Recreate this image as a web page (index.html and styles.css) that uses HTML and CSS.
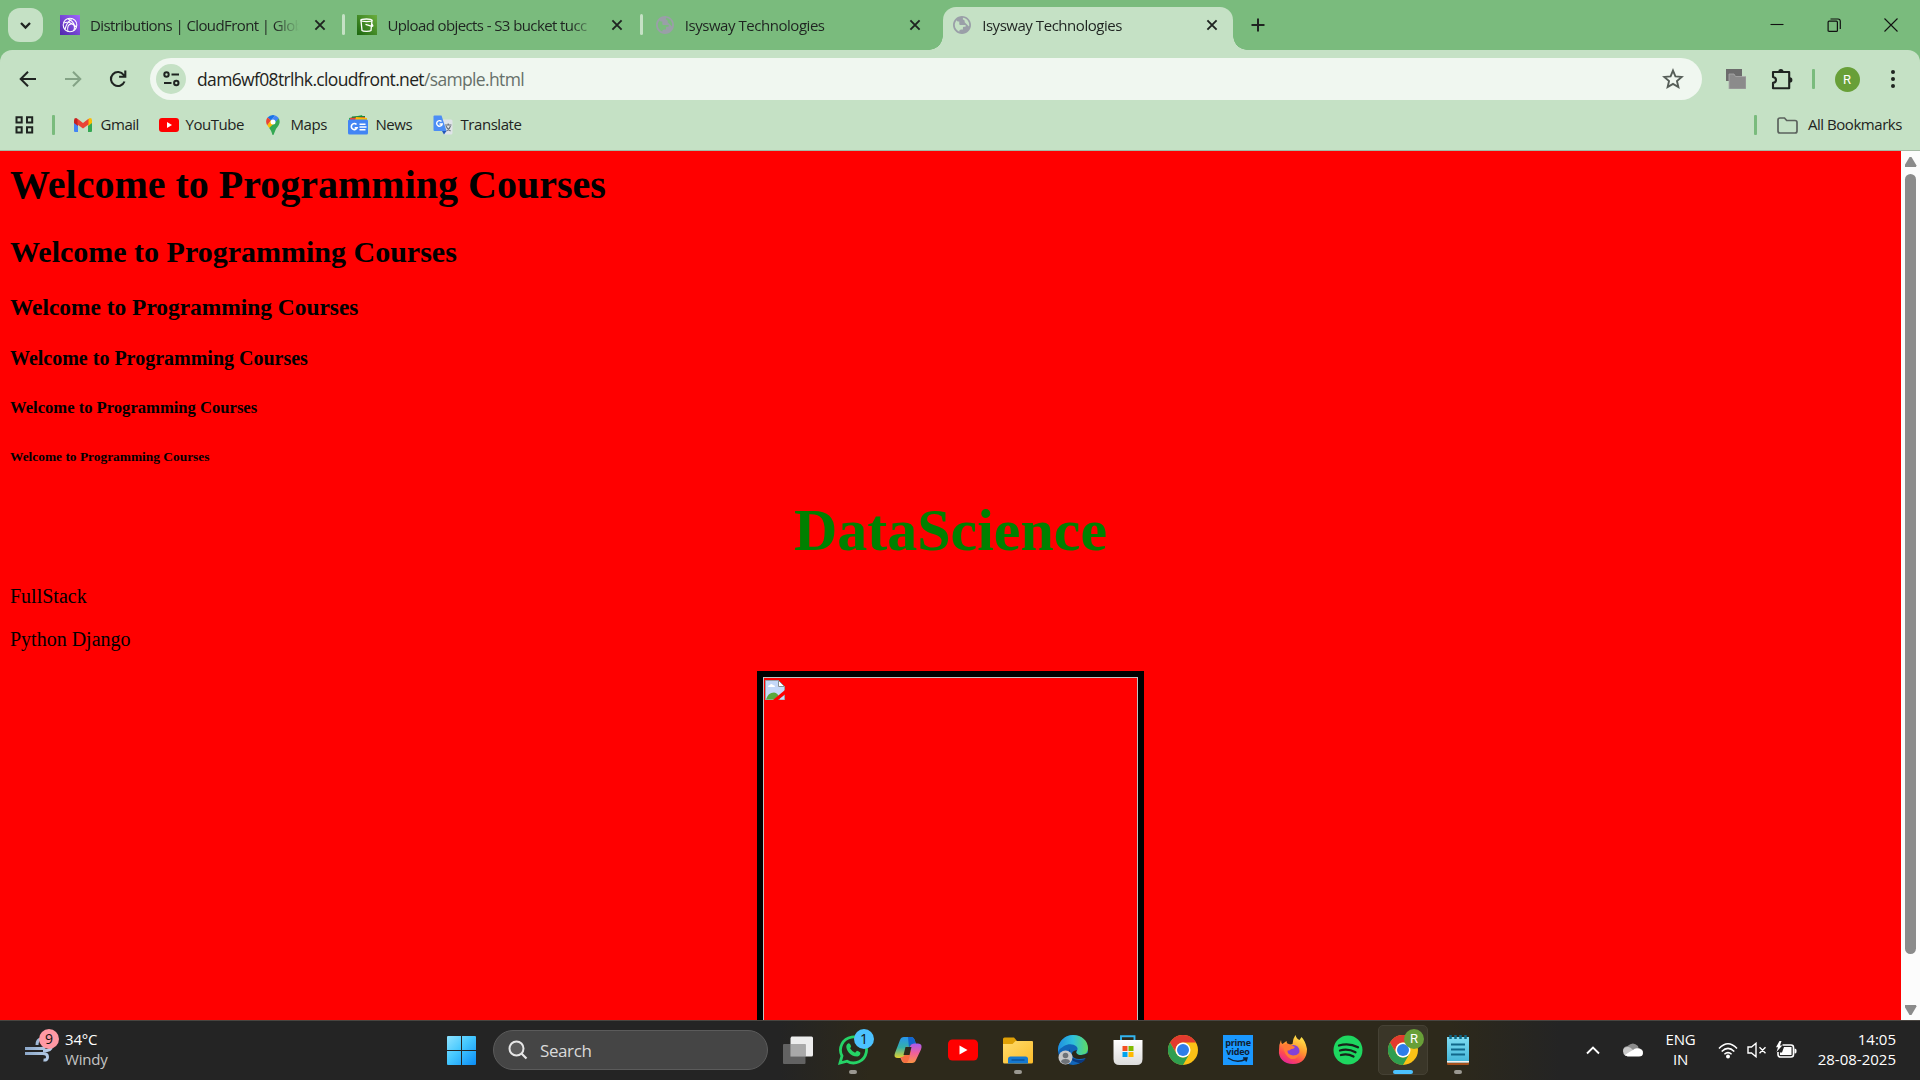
FILE: index.html
```html
<!DOCTYPE html>
<html lang="en">
<head>
<meta charset="utf-8">
<title>Isysway Technologies</title>
<link rel="stylesheet" href="styles.css">
</head>
<body>
<svg class="defs" aria-hidden="true">
  <defs>
    <linearGradient id="purple" x1="0" y1="1" x2="1" y2="0"><stop offset="0" stop-color="#4d27aa"/><stop offset="1" stop-color="#a166ff"/></linearGradient>
    <linearGradient id="green" x1="0" y1="1" x2="1" y2="0"><stop offset="0" stop-color="#1b660f"/><stop offset="1" stop-color="#6cae3e"/></linearGradient>
    <linearGradient id="win" gradientUnits="userSpaceOnUse" x1="0" y1="0" x2="29" y2="29"><stop offset="0" stop-color="#8fe3ff"/><stop offset=".45" stop-color="#45c8ff"/><stop offset="1" stop-color="#0a8cf5"/></linearGradient>
    <linearGradient id="folder" x1="0" y1="0" x2="1" y2="1"><stop offset="0" stop-color="#ffdb6b"/><stop offset="1" stop-color="#fcbc2a"/></linearGradient>
    <linearGradient id="edgeTop" x1="0" y1="0" x2="1" y2="0"><stop offset="0" stop-color="#1f8fe0"/><stop offset=".5" stop-color="#2fc0dc"/><stop offset="1" stop-color="#5fdc62"/></linearGradient>
    <linearGradient id="copA" x1="0" y1="0" x2="0" y2="1"><stop offset="0" stop-color="#2796f0"/><stop offset=".5" stop-color="#35b0a8"/><stop offset="1" stop-color="#e5d22c"/></linearGradient>
    <linearGradient id="copB" x1="0" y1="0" x2="0" y2="1"><stop offset="0" stop-color="#a85bf0"/><stop offset=".5" stop-color="#f0609a"/><stop offset="1" stop-color="#fb9442"/></linearGradient>
    <linearGradient id="fox" x1=".8" y1="0" x2=".3" y2="1"><stop offset="0" stop-color="#fff14f"/><stop offset=".45" stop-color="#ff9a2e"/><stop offset=".75" stop-color="#ff4a50"/><stop offset="1" stop-color="#e3249b"/></linearGradient>
    <linearGradient id="wind" x1="0" y1="0" x2="1" y2="0"><stop offset="0" stop-color="#8ba7c8"/><stop offset="1" stop-color="#bad0ea"/></linearGradient>
    <linearGradient id="note" x1="0" y1="0" x2="0" y2="1"><stop offset="0" stop-color="#7fdcf2"/><stop offset="1" stop-color="#42b5d8"/></linearGradient>
    <linearGradient id="bag" x1="0" y1="0" x2="0" y2="1"><stop offset="0" stop-color="#fff"/><stop offset="1" stop-color="#dcdcdc"/></linearGradient>
  </defs>
  <symbol id="x" viewBox="0 0 12 12"><path d="M1.4 1.4l9.2 9.2M10.6 1.4l-9.2 9.2" stroke="#1f2421" stroke-width="1.9"/></symbol>
  <symbol id="globe" viewBox="2 2 20 20"><path d="M12 2C6.480 2 2 6.480 2 12s4.480 10 10 10 10-4.480 10-10S17.520 2 12 2zM11 19.930C7.050 19.440 4 16.080 4 12c0-.620.080-1.210.210-1.790L9 15v1c0 1.100.900 2 2 2zM17.900 17.390c-.260-.810-1-1.390-1.900-1.390h-1v-3c0-.550-.450-1-1-1H8v-2h2c.550 0 1-.450 1-1V7h2c1.100 0 2-.900 2-2v-.410c2.930 1.190 5 4.060 5 7.410 0 2.080-.800 3.970-2.100 5.390z" fill="#9a9fa8" transform="matrix(-1 0 0 -1 24 24)"/></symbol>
  <symbol id="chrome" viewBox="0 0 30 30">
    <circle cx="15" cy="15" r="15" fill="#fbc116"/>
    <path d="M2 7.500A15 15 0 0 1 28 7.500H15A7.500 7.500 0 0 0 8.500 18.750z" fill="#e23a2e"/>
    <path d="M2 7.500A15 15 0 0 0 15 30L21.500 18.750A7.500 7.500 0 0 1 8.500 18.750z" fill="#2f9e4f"/>
    <circle cx="15" cy="15" r="7.500" fill="#fff"/><circle cx="15" cy="15" r="6" fill="#2f7de9"/>
  </symbol>
</svg>

<div class="desktop">
  <header class="tabstrip">
    <button class="tab-search"><svg width="13" height="9" viewBox="0 0 13 9"><path d="M2 2l4.500 4.500L11 2" fill="none" stroke="#1f2421" stroke-width="2.300"/></svg></button>
    <div class="tab tab-divided">
      <svg class="favicon" viewBox="0 0 20 20"><rect width="20" height="20" fill="url(#purple)"/><g fill="none" stroke="#fff" stroke-width="1.100"><circle cx="10" cy="10" r="6.800"/><path d="M5 14.500c1-5 3-8 6.500-10M8 16.500c-1-4 0-8 4-7.500 3 .5 3 4 1.500 7M4 8c3-1.500 7-1 12.500 4M8 4c3 1 6 4 7 8"/></g></svg>
      <span class="tab-title">Distributions | CloudFront | Glob</span>
      <svg class="tab-close"><use href="#x"/></svg>
    </div>
    <div class="tab tab-divided">
      <svg class="favicon" viewBox="0 0 20 20"><rect width="20" height="20" fill="url(#green)"/><g fill="none" stroke="#fff" stroke-width="1.300"><path d="M4 5.500l1 10c1 1.200 8 1.200 9 0l1-10"/><ellipse cx="9.500" cy="5.300" rx="5.700" ry="1.300"/><path d="M8.500 9.300l6.500 2c1.300.2.900-1.500-.3-2.300"/></g></svg>
      <span class="tab-title">Upload objects - S3 bucket tucc</span>
      <svg class="tab-close"><use href="#x"/></svg>
    </div>
    <div class="tab">
      <svg class="favicon globe"><use href="#globe"/></svg>
      <span class="tab-title">Isysway Technologies</span>
      <svg class="tab-close"><use href="#x"/></svg>
    </div>
    <div class="tab active">
      <svg class="favicon globe"><use href="#globe"/></svg>
      <span class="tab-title">Isysway Technologies</span>
      <svg class="tab-close"><use href="#x"/></svg>
    </div>
    <svg class="new-tab" viewBox="0 0 14 14"><path d="M7 .5v13M.5 7h13" stroke="#1f2421" stroke-width="2"/></svg>
    <div class="window-controls">
      <svg viewBox="0 0 14 14"><path d="M.5 6.500h13" stroke="#111" stroke-width="1.100"/></svg>
      <svg viewBox="0 0 14 14"><path d="M1.100 4.200q0-1 1-1h7.300q1 0 1 1v8.200q0 1-1 1H2.100q-1 0-1-1zM3.500 1h7.500q2.300 0 2.300 2.300V11" fill="none" stroke="#111" stroke-width="1.200"/></svg>
      <svg viewBox="0 0 14 14"><path d="M.5 .5l13 13M13.500 .5l-13 13" stroke="#111" stroke-width="1.100"/></svg>
    </div>
  </header>

  <div class="chrome-bars">
    <nav class="toolbar">
      <div class="nav-icons">
        <svg viewBox="0 0 20 20"><path d="M18 10H3M10 2.700L2.700 10l7.300 7.300" fill="none" stroke="#1f2421" stroke-width="2"/></svg>
        <svg viewBox="0 0 20 20"><path d="M2 10h15M10 2.700l7.300 7.300-7.300 7.300" fill="none" stroke="#84a386" stroke-width="2"/></svg>
        <svg viewBox="0 0 20 20"><path d="M16.500 12.500A7 7 0 1 1 15.700 6l1.300 1.600M17.300 1.500v6.200h-6.200" fill="none" stroke="#1f2421" stroke-width="2.100"/></svg>
      </div>
      <div class="omnibox">
        <span class="site-info"><svg width="17" height="16" viewBox="0 0 17 16"><g fill="none" stroke="#1f2421" stroke-width="2"><circle cx="3.500" cy="3.500" r="2.200"/><path d="M8.500 3.500H16M1 12h7.500"/><circle cx="13.300" cy="12" r="2.200"/></g></svg></span>
        <span class="url">dam6wf08trlhk.cloudfront.net<span class="path">/sample.html</span></span>
        <svg class="star" viewBox="0 0 20 20"><path d="M10 2.300l2.200 5.300 5.700.5-4.300 3.700 1.300 5.600L10 14.400l-4.900 3 1.300-5.600L2.100 8.100l5.700-.5z" fill="none" stroke="#565e58" stroke-width="1.700"/></svg>
      </div>
      <div class="tool-icons">
        <svg width="20" height="20" viewBox="0 0 20 20"><path d="M0 0h16v12H0z" fill="#6c6c6c"/><path d="M3 5h5l1.500 2.500H20V20H3z" fill="#8b8b8b" stroke="#aaa" stroke-width=".8"/></svg>
        <svg class="puzzle" width="22" height="22" viewBox="0 0 22 22"><path d="M2 4h16.200v16.200H2v-5.300q3-.3 3-2.900T2 9z" fill="none" stroke="#1f2421" stroke-width="2.100" stroke-linejoin="round"/><path d="M7.300 3.500a2.600 2.600 0 0 1 5.200 0zM18.800 9.300a2.600 2.600 0 0 1 0 5.200z" fill="#1f2421"/></svg>
        <i class="bar-rule"></i>
        <span class="avatar">R</span>
        <svg class="dots" width="6" height="20" viewBox="0 0 6 20"><g fill="#1f2421"><circle cx="3" cy="3" r="2"/><circle cx="3" cy="10" r="2"/><circle cx="3" cy="17" r="2"/></g></svg>
      </div>
    </nav>
    <nav class="bookmarks">
      <svg class="apps" width="19" height="18" viewBox="0 0 19 18"><path d="M1.500 1.200h5.200v5.200H1.500zM12 1.200h5.200v5.200H12zM1.500 11.300h5.200v5.200H1.500zM12 11.300h5.200v5.200H12z" fill="none" stroke="#1f2421" stroke-width="2"/></svg>
      <i class="bar-rule apps-rule"></i>
      <a class="bookmark gmail"><svg width="20" height="20" viewBox="0 0 20 20"><path d="M1 5v11q0 1 1 1h3V8z" fill="#4285f4"/><path d="M19 5v11q0 1-1 1h-3V8z" fill="#34a853"/><path d="M1 5.500Q1 3 3.200 3.100L5 4.200V11L1 8z" fill="#c5221f"/><path d="M19 5.500Q19 3 16.800 3.100L15 4.200V11l4-3z" fill="#fbbc04"/><path d="M4.500 3.800L10 8l5.500-4.200V9.500L10 13.500l-5.500-4z" fill="#ea4335"/></svg><span>Gmail</span></a>
      <a class="bookmark youtube"><svg width="20" height="14" viewBox="0 0 20 14"><rect width="20" height="14" rx="3" fill="#f00"/><path d="M8 4l5 3-5 3z" fill="#fff"/></svg><span>YouTube</span></a>
      <a class="bookmark maps"><svg width="14" height="20" viewBox="0 0 14 20"><path d="M7 0a7 7 0 0 0-5.400 2.500L5 5.400 9 .4z" fill="#1a73e8"/><path d="M1.600 2.500C-.6 5 0 8.300 1.300 10.300L5 5.400z" fill="#ea4335"/><path d="M9 .4L4.700 5.600 9 8.700l3.900-5.100C12 2 10.800.8 9 .4z" fill="#4285f4"/><path d="M1.300 10.300L4.800 5.500 9.500 8.300 3.200 13z" fill="#fbbc04"/><path d="M12.900 3.600c2.500 5.400-1.900 8-3.400 11.400L7.700 19.500q-.7 1-1.400 0C5.700 17 4.700 14.800 3.200 13z" fill="#34a853"/><circle cx="7" cy="7" r="2.500" fill="#fff"/></svg><span>Maps</span></a>
      <a class="bookmark news"><svg width="20" height="20" viewBox="0 0 20 20"><path d="M1 3l13-3 2 5H1z" fill="#34a853"/><path d="M4 1.500l13-.5v5H3z" fill="#188038"/><path d="M2 3l15-1v4H2z" fill="#ea4335"/><path d="M8 2l11 1v3H7z" fill="#fbbc04"/><rect y="4.500" width="20" height="15" rx="1.500" fill="#4285f4"/><path d="M8.500 9.500a3 3 0 1 0 .6 3.200H6.700M11.500 9.300h6M11.500 12h7M11.500 14.700h6" fill="none" stroke="#fff" stroke-width="1.600"/></svg><span>News</span></a>
      <a class="bookmark translate"><svg width="20" height="20" viewBox="0 0 20 20"><path d="M8 4.500h10q1.500 0 1.500 1.500v12q0 1.500-1.500 1.500h-7z" fill="#dfe3e8"/><path d="M12 10h6.500M15.200 8.500V10M13 11q1 3 4.500 5M17.500 11q-1 3.500-4 5" fill="none" stroke="#687078" stroke-width="1.100"/><path d="M1.500.500h7L13.500 16h-12Q.500 16 .500 15V1.500q0-1 1-1z" fill="#4c8df5"/><path d="M11 19.500l2.500-3.500H9z" fill="#2256b8"/><path d="M8.500 6.500A2.800 2.800 0 1 0 9.200 9H6.500" fill="none" stroke="#fff" stroke-width="1.400"/></svg><span>Translate</span></a>
      <div class="all-bookmarks"><i class="bar-rule"></i><svg width="21" height="17" viewBox="0 0 21 17"><path d="M1 3q0-2 2-2h4.500l2.200 2.500H18q2 0 2 2V14q0 2-2 2H3q-2 0-2-2z" fill="none" stroke="#5b625d" stroke-width="1.700"/></svg><span>All Bookmarks</span></div>
    </nav>
  </div>

  <div class="viewport">
    <main class="page">
      <h1>Welcome to Programming Courses</h1>
      <h2>Welcome to Programming Courses</h2>
      <h3>Welcome to Programming Courses</h3>
      <h4>Welcome to Programming Courses</h4>
      <h5>Welcome to Programming Courses</h5>
      <h6>Welcome to Programming Courses</h6>
      <h1 class="course">DataScience</h1>
      <p>FullStack</p>
      <p>Python Django</p>
      <div class="photo"><svg width="20" height="20" viewBox="0 0 20 20"><path d="M.500.500h13l6 6V20H.500z" fill="#c4d8f8" stroke="#9aa0a4"/><path d="M13.500.500v6h6z" fill="#fff" stroke="#8b9094"/><path d="M3 7q0-2 2-2 1-2 3 0 2 0 2 2z" fill="#fff"/><path d="M1 19.500q2-7 8-7 4 0 6 7z" fill="#5aa83c"/><path d="M20 10v4.500L13 20H8z" fill="red"/></svg></div>
    </main>
    <div class="scrollbar"><i class="arrow-up"></i><i class="thumb"></i><i class="arrow-down"></i></div>
  </div>

  <footer class="taskbar">
    <div class="weather">
      <span class="weather-icon"><svg width="30" height="26" viewBox="0 0 30 26"><path d="M0 12.500h16q5 0 5-5t-5-4.500q-4 .5-4 6M0 17.500h18q4.500 0 4.500 3.500t-4 3M18 14.500h4q6-1 4-7" fill="none" stroke="url(#wind)" stroke-width="3"/></svg><b class="badge">9</b></span>
      <span class="weather-text"><span>34°C</span><span class="dim">Windy</span></span>
    </div>
    <div class="apps-row">
      <svg class="start" width="29" height="29" viewBox="0 0 29 29"><path d="M0 1q0-1 1-1h13v14H0zM15 0h13q1 0 1 1v13H15zM0 15h14v14H1q-1 0-1-1zM15 15h14v13q0 1-1 1H15z" fill="url(#win)"/></svg>
      <div class="search"><svg width="20" height="20" viewBox="0 0 20 20"><circle cx="8.500" cy="8.500" r="7" fill="#5b5b5b" stroke="#e6e6e6" stroke-width="2"/><path d="M13.500 13.500l5 5" stroke="#e6e6e6" stroke-width="2.200"/></svg><span>Search</span></div>
      <span class="app"><svg viewBox="0 0 30 30"><path d="M8.500 1.500h20q1.500 0 1.500 1.500v17q0 1.500-1.500 1.500h-21V3z" fill="#ededed"/><rect y="9" width="22.500" height="20" rx="1" fill="#696969" fill-opacity=".9"/><path d="M7.500 9h15v12.500h-15z" fill="#a9a9a9"/></svg></span>
      <span class="app running"><svg viewBox="0 0 30 30"><path d="M2 28l2-7A13 13 0 1 1 9 26.200z" fill="none" stroke="#25d366" stroke-width="2.800"/><path d="M10 8.500q2-1 3 2.500.3 1-.9 2.200 2 3.500 5 4.500l1.600-1.800q1-.3 3.600 1.500.5 3-3 4.100C12 21.500 8 15 8.300 11q.4-1.800 1.700-2.500z" fill="#25d366"/></svg><b class="badge blue">1</b></span>
      <span class="app"><svg viewBox="0 0 30 30"><path d="M7 5Q8 2 11 2h7q3 0 4 4l1 3h-3q-3 0-4 4l-2 7q-1 3-4 3H5Q0 23 2 18z" fill="url(#copA)"/><path d="M15 2h3q3 0 4 4l1 3h-3q-3 0-4 4z" fill="#1264ce"/><path d="M23 25q-1 3-4 3h-7q-3 0-4-4l-1-2h3q3 0 4-3l3-8q1-2.500 4-2.500h4q5 0 3 6z" fill="url(#copB)"/><path d="M14 10.500l-2 8q-1 3.500-3.500 3.500H8l1 2q1 4 4 4 2-.5 3-4l2-8q-4-1-4-5.500z" fill="#f66d42"/><path d="M12.500 12h6l-2 8h-6z" fill="#2d291b"/></svg></span>
      <span class="app"><svg viewBox="0 0 30 30"><rect y="4.500" width="30" height="21" rx="4.500" fill="#f00"/><path d="M11.500 10.500l8 4.500-8 4.500z" fill="#fff"/></svg></span>
      <span class="app running"><svg viewBox="0 0 30 30"><path d="M0 4q0-1.500 1.500-1.500H11L14 6v5H0z" fill="#dfa006"/><path d="M0 9h9.500l3-3H29q1 0 1 1v20q0 1.500-1.500 1.500h-27Q0 28.500 0 27z" fill="url(#folder)"/><path d="M5 28.500V24q0-2.500 2.500-2.500h15Q25 21.500 25 24v4.500z" fill="#1579d1"/><path d="M8.500 25h13" stroke="#0a4e94" stroke-width="1.300"/></svg></span>
      <span class="app"><svg viewBox="0 0 30 30"><circle cx="15" cy="15" r="15" fill="#1166ba"/><path d="M0 14C1 5 8 0 15 0c9 0 15 6 15 13 0 5-3 7-8 7-4 0-5-2-3-4 3-5-6-9-13-5Q2 13 0 17z" fill="url(#edgeTop)"/><path d="M12 14c-2 6 3 12 11 11 2 0 4-1 5-2q-1 3-5 5c-8 0-16-7-11-14z" fill="#0a397e"/><path d="M19 15q-2 2.500 1 4.500 4 1.700 10-1.500v4l-2 1q-12 3-14-3-1-4 5-5z" fill="#2a271a"/><circle cx="7.500" cy="22.500" r="7" fill="#c6c7c9"/><circle cx="7.500" cy="20.500" r="2.800" fill="#6e7278"/><path d="M3 27q0-3 4.500-3t4.500 3q-4.500 4-9 0z" fill="#6e7278"/></svg></span>
      <span class="app"><svg viewBox="0 0 30 30"><path d="M8 7V1.200h13.500V7" fill="none" stroke="#32b5ef" stroke-width="1.900"/><path d="M.5 5h29v19q0 6-6 6h-17q-6 0-6-6z" fill="url(#bag)"/><path d="M9.500 11h5v5h-5z" fill="#f25022"/><path d="M15.500 11h5v5h-5z" fill="#7fba00"/><path d="M9.500 17h5v5h-5z" fill="#00a4ef"/><path d="M15.500 17h5v5h-5z" fill="#ffb900"/></svg></span>
      <span class="app"><svg><use href="#chrome"/></svg></span>
      <span class="app"><span class="prime">prime<br>video<svg viewBox="0 0 22 6"><path d="M1 1q9 6 18 1M16 1h4l-1 3.500" fill="none" stroke="#102033" stroke-width="1.500"/></svg></span></span>
      <span class="app"><svg viewBox="0 0 30 30"><path d="M3 5q0 3 1.500 4l4-3q0 2.500 2 4l4-1q0-5 3-9 1 4 4 5l2-3q4 4 5.500 12C29 23 24 29 15 29 6 29 0 23 1 15q0-6 2-10z" fill="url(#fox)"/><circle cx="15.500" cy="16" r="6" fill="#8441d6"/><path d="M5 10q4-3 8 0l4 2q-1 2.500-4 2-1 2-4 1.500 0 4 6 5 4 0 7-3Q20 25 13 24 6 21 5 10z" fill="#ff7a35"/></svg></span>
      <span class="app"><svg viewBox="0 0 30 30"><circle cx="15" cy="15" r="14.500" fill="#1ed760"/><path d="M6 10.500q10-3 19 1.800M7 15.500q8-2.300 15.500 1.700M8 20q6.500-1.800 12.500 1.500" fill="none" stroke="#17221a" stroke-width="2.300" stroke-linecap="round"/></svg></span>
      <span class="app current"><svg><use href="#chrome"/></svg><b class="badge profile">R</b></span>
      <span class="app running"><svg viewBox="0 0 30 30"><path d="M4 27h22v2q0 1-1 1H5q-1 0-1-1z" fill="#a5501c"/><path d="M4 2h22v24q0 1.500-1.500 1.500h-19Q4 27.500 4 26z" fill="url(#note)"/><path d="M4 26h22v1.500H4z" fill="#f1f1f1"/><path d="M8 9.500h14M8 14.500h14M8 19.500h14" stroke="#11678a" stroke-width="2"/><path d="M7.500 0v4M12.500 0v4M17.500 0v4M22.500 0v4" stroke="#0e6684" stroke-width="2.500"/></svg></span>
    </div>
    <div class="tray">
      <svg class="chevron" width="14" height="9" viewBox="0 0 14 9"><path d="M1 7.500l6-6 6 6" fill="none" stroke="#fff" stroke-width="1.900"/></svg>
      <svg class="cloud" width="20" height="14" viewBox="0 0 20 14"><path d="M2.500 11Q0 9 0 7q.5-3.500 4.500-4Q10-2 15 3l.5 2q4.500 1 4.500 4z" fill="#8b8b8b"/><path d="M0 8q.5-4 4.500-4 3-.5 5 2.500l5 3-12 3.500Q0 11.500 0 8z" fill="#c9c9c9"/><path d="M2 12q4-3 8-5 2-2.500 6-1.500 4 1 4 4.500 0 3.500-4 3.500H4.500z" fill="#fff"/></svg>
      <span class="lang"><span>ENG</span><span>IN</span></span>
      <span class="status">
        <svg width="20" height="17" viewBox="0 0 20 17"><path d="M1 6.500q9-9.500 18 0M3.700 9.500q6.300-6.300 12.600 0M6.400 12.300q3.600-3.300 7.200 0" fill="none" stroke="#fff" stroke-width="1.500"/><circle cx="10" cy="14.500" r="2" fill="#fff"/></svg>
        <svg width="20" height="16" viewBox="0 0 20 16"><path d="M1 5h3.500L9 1.300v13.400L4.500 11H1zM12.500 5.200l6 6M18.500 5.200l-6 6" fill="none" stroke="#fff" stroke-width="1.400"/></svg>
        <svg width="21" height="18" viewBox="0 0 21 18"><path d="M6.500 4H15q2.500 0 2.500 2.500v7q0 2.500-2.500 2.500H4.500Q2 16 2 13.500V11" fill="none" stroke="#fff" stroke-width="1.600"/><path d="M18.500 7.500q2 0 2 1.500v2q0 1.500-2 1.500zM8 6h7.500v8H4v-2.500h2z" fill="#fff"/><path d="M3.500 0L0 6.200h2L.500 11 6.300 4.500H4L5.500 0z" fill="#fff"/></svg>
      </span>
      <span class="clock"><span>14:05</span><span>28-08-2025</span></span>
    </div>
  </footer>
</div>
</body>
</html>
```
FILE: styles.css
```css
* { box-sizing: border-box; }
body { margin: 0; font-family: "Open Sans", "Noto Sans", sans-serif; font-size: 15px; color: #1f2421; }
svg { display: block; flex: none; }
.defs { width: 0; height: 0; position: absolute; }
.desktop { width: 1920px; height: 1080px; overflow: hidden; display: grid; grid-template-rows: 50px 101px 869px 60px; background: #7abb7d; }

/* tab strip */
.tabstrip { display: flex; align-items: center; padding-left: 8px; }
.tab-search { width: 35px; height: 34px; margin-right: 5px; padding: 0; border: 0; border-radius: 12px; background: #c5e1c5; display: flex; align-items: center; justify-content: center; }
.tab { position: relative; width: 297.400px; height: 50px; padding: 0 19px 0 12px; display: flex; align-items: center; flex: none; }
.favicon { width: 20px; height: 20px; margin-right: 10px; }
.globe { width: 18px; height: 18px; margin: 0 11px 0 1px; }
.tab-title { width: 209px; overflow: hidden; white-space: nowrap; letter-spacing: -.6px; font-size: 15px; -webkit-mask-image: linear-gradient(90deg, #000 88%, transparent); }
.globe + .tab-title { letter-spacing: -.46px; }
.tab-close { width: 12px; height: 12px; margin-left: 15px; }
.tab-divided::after { content: ""; position: absolute; right: 0; top: 14px; width: 3px; height: 21px; border-radius: 2px; background: #c5e1c5; }
.active::before { content: ""; position: absolute; z-index: 0; left: 3px; top: 7px; width: 290px; height: 43px; border-radius: 13px 13px 0 0; background: #c5e1c5; }
.active::after { content: ""; position: absolute; left: -11px; bottom: 0; width: 318px; height: 14px; background: radial-gradient(circle at 0 0, transparent 13.500px, #c5e1c5 14px) 0 0 / 14px 14px no-repeat, radial-gradient(circle at 100% 0, transparent 13.500px, #c5e1c5 14px) 100% 0 / 14px 14px no-repeat; }
.active > * { position: relative; z-index: 1; }
.new-tab { width: 14px; height: 14px; margin-left: 13px; }
.window-controls { margin-left: auto; display: flex; gap: 43px; padding-right: 22px; }
.window-controls svg { width: 14px; height: 14px; }

/* toolbar and bookmarks */
.chrome-bars { background: #c5e1c5; border-radius: 12px 12px 0 0; border-bottom: 1px solid #a3b9a3; display: grid; grid-template-rows: 58px 42px; }
.toolbar { display: flex; align-items: center; padding-left: 18px; }
.nav-icons { display: flex; gap: 25px; width: 132px; }
.nav-icons svg { width: 20px; height: 20px; }
.omnibox { width: 1552px; height: 42px; border-radius: 21px; background: #f0f7f0; display: flex; align-items: center; padding-left: 6px; }
.site-info { width: 30px; height: 30px; border-radius: 50%; background: #c5e1c5; display: flex; align-items: center; justify-content: center; }
.url { margin-left: 11px; font-size: 17.500px; letter-spacing: -.65px; white-space: nowrap; }
.path { color: #66706a; }
.star { width: 22px; height: 22px; margin: 0 18px 0 auto; }
.tool-icons { display: flex; align-items: center; padding-left: 24px; }
.puzzle { margin-left: 25px; }
.bar-rule { width: 2.500px; height: 20px; border-radius: 1px; background: #7abb7d; flex: none; }
.tool-icons .bar-rule { margin: 0 20px 0 19px; }
.avatar { width: 25px; height: 25px; border-radius: 50%; background: #689f38; color: #fff; font: 13px/25px Roboto, sans-serif; text-align: center; }
.dots { margin-left: 30px; }
.bookmarks { display: flex; align-items: center; padding: 0 18px 8px 15px; white-space: nowrap; }
.apps-rule { margin: 0 18px 0 18px; }
.bookmark { display: flex; align-items: center; letter-spacing: -.45px; }
.bookmark span, .all-bookmarks span { line-height: 20px; margin-top: -2px; }
.gmail { width: 86px; gap: 8px; }
.youtube { width: 107px; gap: 7px; }
.maps { width: 82px; gap: 11px; }
.news { width: 85px; gap: 8px; }
.translate { gap: 8px; }
.all-bookmarks { margin-left: auto; display: flex; align-items: center; letter-spacing: -.45px; }
.all-bookmarks svg { margin: 0 10px 0 20px; }

/* web page */
.viewport { display: flex; min-height: 0; overflow: hidden; }
.page { width: 1901px; background: red; padding: 11px 10px 0; color: #000; font-family: "Liberation Serif", "Times New Roman", serif; font-size: 20px; overflow: hidden; }
.page h1, .page h2, .page h3, .page h4, .page h5, .page h6 { font-weight: bold; }
.page h1 { font-size: 40px; line-height: 46px; margin: 0 0 26.800px; }
.page h2 { font-size: 30px; line-height: 34px; margin: 0 0 24.900px; }
.page h3 { font-size: 23.400px; line-height: 27px; margin: 0 0 26.600px; }
.page h4 { font-size: 20px; line-height: 22px; margin: 0 0 28.700px; }
.page h5 { font-size: 16.600px; line-height: 19px; margin: 0 0 32.200px; }
.page h6 { font-size: 13.400px; line-height: 15px; margin: 0 0 32.200px; }
.page .course { font-size: 60px; line-height: 69px; margin: 0 0 20px; color: green; text-align: center; }
.page p { line-height: 23px; margin: 0 0 20px; }
.photo { width: 387px; height: 387px; margin: 0 auto; border: 6px solid #000; position: relative; padding: 3px 2px; outline: 1px solid #c0c0c0; outline-offset: -7px; }
.scrollbar { width: 19px; background: #fcfcfc; display: flex; flex-direction: column; align-items: center; padding-top: 6px; }
.arrow-up, .arrow-down { width: 12px; height: 10px; background: #8b8b8b; clip-path: polygon(42% 0, 58% 0, 100% 85%, 95% 100%, 5% 100%, 0 85%); }
.arrow-down { transform: scaleY(-1); margin-top: 51px; }
.thumb { width: 11px; height: 780px; margin-top: 7px; border-radius: 6px; background: #8b8b8b; }

/* taskbar */
.taskbar { border-top: 1px solid #494540; display: flex; align-items: center; color: #fff; padding-bottom: 1px; background: linear-gradient(90deg, #242424 0 780px, #2d291b 870px 1450px, #242424 1560px); }
.weather { width: 447px; display: flex; padding-left: 25px; gap: 10px; }
.weather-icon { position: relative; width: 30px; padding-top: 5px; }
.weather-text, .lang, .clock { display: flex; flex-direction: column; line-height: 20px; font-size: 15px; margin-top: -2px; }
.weather-text { letter-spacing: -.2px; }
.dim { color: #c5c5c5; }
.badge { position: absolute; width: 20px; height: 20px; border-radius: 50%; background: #ff99a4; color: #111; font-size: 14px; font-weight: 400; line-height: 20px; text-align: center; }
.weather-icon .badge { top: -2px; right: -4px; }
.badge.blue { top: 4px; right: 4px; background: #4cc2ff; }
.badge.profile { top: 3px; right: 3px; background: #689f38; color: #fff; font-family: Roboto, sans-serif; font-size: 13px; }
.apps-row { display: flex; align-items: center; }
.search { width: 275px; height: 40px; margin: 0 5px 0 17px; padding-left: 14px; border: 1px solid #5b5b5b; border-radius: 20px; background: #454545; color: #dadada; font-size: 17px; letter-spacing: -.4px; display: flex; align-items: center; gap: 12px; }
.app { position: relative; width: 50px; height: 50px; margin-right: 5px; display: flex; align-items: center; justify-content: center; border-radius: 5px; }
.app > svg { width: 30px; height: 30px; }
.current { background: #3a3628; border: 1px solid #454134; }
.running::after, .current::after { content: ""; position: absolute; left: 21px; bottom: 1px; width: 8px; height: 4px; border-radius: 2px; background: #9a9891; }
.current::after { left: 14px; bottom: 0; width: 20px; background: #4cc2ff; }
.prime { width: 30px; height: 30px; background: #1a98ff; color: #102033; font: bold 9px/9px "Open Sans", sans-serif; letter-spacing: -.2px; text-align: center; padding-top: 3px; }
.prime svg { width: 22px; height: 6px; margin: 1px auto 0; }
.tray { margin-left: auto; padding-right: 24px; display: flex; align-items: center; }
.cloud { margin-left: 23px; }
.lang { width: 75px; align-items: center; letter-spacing: -.2px; }
.status { display: flex; gap: 9px; align-items: center; }
.clock { width: 99px; align-items: flex-end; }
```
